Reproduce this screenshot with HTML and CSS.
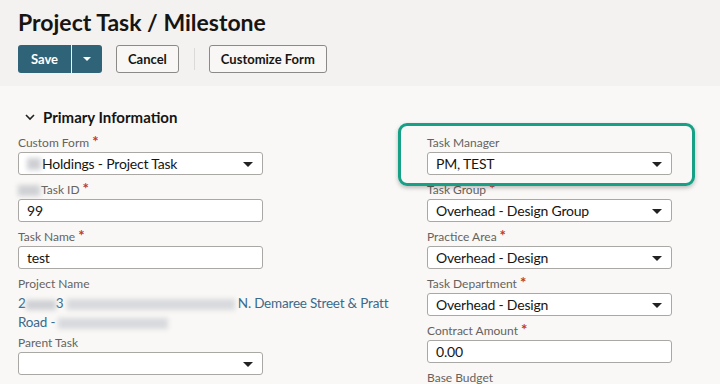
FILE: index.html
```html
<!DOCTYPE html>
<html lang="en">
<head>
    <meta charset="UTF-8">
    <meta name="viewport" content="width=device-width, initial-scale=1.0">
    <title>Project Task / Milestone</title>
    <link rel="stylesheet" href="styles.css">
</head>
<body>

    <!-- Page header with title and action buttons -->
    <header class="page-header">
        <h1>Project Task / Milestone</h1>
        <div class="actions">
            <div class="split-btn">
                <button class="btn-primary">Save</button>
                <button class="btn-primary caret-btn">
                    <svg width="10" height="6" viewBox="0 0 10 6"><path d="M1 1h8L5 5z" fill="#fff"/></svg>
                </button>
            </div>
            <button class="btn">Cancel</button>
            <span class="separator"></span>
            <button class="btn">Customize Form</button>
        </div>
    </header>

    <main class="content">
        <div class="section-title">
            <svg width="12" height="8" viewBox="0 0 12 8"><path d="M2 2l4 4 4-4" fill="none" stroke="#222" stroke-width="1.6"/></svg>
            <span>Primary Information</span>
        </div>

        <div class="form-grid">
            <!-- Left column -->
            <div class="column">
                <label class="field-label">Custom Form <span class="req">*</span></label>
                <div class="select"><span class="blur blur-sm"></span>Holdings - Project Task<span class="arrow"></span></div>

                <label class="field-label"><span class="blur blur-label"></span>Task ID <span class="req">*</span></label>
                <div class="input">99</div>

                <label class="field-label">Task Name <span class="req">*</span></label>
                <div class="input">test</div>

                <label class="field-label">Project Name</label>
                <div class="link-value">
                    2<span class="blur blur-num"></span>3 <span class="blur blur-long"></span> N. Demaree Street &amp; Pratt<br>
                    Road - <span class="blur blur-mid"></span>
                </div>

                <label class="field-label">Parent Task</label>
                <div class="select"><span class="arrow"></span></div>
            </div>

            <!-- Right column -->
            <div class="column">
                <div class="highlight"></div>
                <label class="field-label">Task Manager</label>
                <div class="select">PM, TEST<span class="arrow"></span></div>

                <label class="field-label">Task Group <span class="req">*</span></label>
                <div class="select">Overhead - Design Group<span class="arrow"></span></div>

                <label class="field-label">Practice Area <span class="req">*</span></label>
                <div class="select">Overhead - Design<span class="arrow"></span></div>

                <label class="field-label">Task Department <span class="req">*</span></label>
                <div class="select">Overhead - Design<span class="arrow"></span></div>

                <label class="field-label">Contract Amount <span class="req">*</span></label>
                <div class="input">0.00</div>

                <label class="field-label">Base Budget</label>
            </div>
        </div>
    </main>

</body>
</html>
```

FILE: styles.css
```css
/* Basic reset */
* {
    margin: 0;
    padding: 0;
    box-sizing: border-box;
}

body {
    font-family: 'Lato', 'Noto Sans', sans-serif;
    background: #f9f8f6;
    color: #161513;
    width: 720px;
    height: 384px;
    overflow: hidden;
}

/* Header */
.page-header {
    background: #f3f2f0;
    padding: 7px 18px 13px;
}

h1 {
    font-size: 23px;
    font-weight: 700;
    line-height: 30px;
}

.actions {
    display: flex;
    align-items: center;
    margin-top: 8px;
    height: 28px;
}

.split-btn {
    display: flex;
    border-radius: 3px;
    overflow: hidden;
}

button {
    font-family: inherit;
    font-size: 13px;
    font-weight: 700;
    height: 28px;
    cursor: pointer;
}

.btn-primary {
    background: #2f6478;
    color: #fff;
    border: none;
    width: 53px;
}

.caret-btn {
    width: 30px;
    margin-left: 1px;
    display: flex;
    align-items: center;
    justify-content: center;
}

.btn {
    background: #f8f7f5;
    color: #161513;
    border: 1px solid #8c8a87;
    border-radius: 3px;
    padding: 0 11px;
    margin-left: 14px;
}

.separator {
    width: 1px;
    height: 22px;
    background: #dcdad6;
    margin-left: 15px;
}

.separator + .btn {
    margin-left: 14px;
}

/* Content */
.content {
    padding: 21px 18px 0;
}

.section-title {
    display: flex;
    align-items: center;
    gap: 7px;
    padding-left: 6px;
    font-size: 15px;
    font-weight: 700;
    line-height: 20px;
}

.form-grid {
    display: grid;
    grid-template-columns: 245px 245px;
    column-gap: 164px;
    margin-top: 8px;
}

.column {
    position: relative;
    display: flex;
    flex-direction: column;
}

.field-label {
    font-size: 12px;
    color: #66635f;
    line-height: 16px;
    margin-bottom: 1px;
    display: flex;
    align-items: center;
}

.req {
    color: #c0392b;
    font-size: 15px;
    font-weight: 700;
    margin-left: 3px;
    line-height: 12px;
    position: relative;
    top: -2px;
}

.select,
.input {
    position: relative;
    height: 23px;
    background: #fff;
    border: 1px solid #aaa8a4;
    border-radius: 3px;
    font-size: 14px;
    letter-spacing: -0.2px;
    line-height: 21px;
    padding: 0 8px;
    margin-bottom: 7px;
    display: flex;
    align-items: center;
}

.arrow {
    position: absolute;
    right: 9px;
    top: 9px;
    border-left: 5px solid transparent;
    border-right: 5px solid transparent;
    border-top: 5px solid #222;
}

.link-value {
    color: #3a6a8c;
    font-size: 13.5px;
    letter-spacing: -0.2px;
    line-height: 19px;
    margin: 1px 0 3px;
    white-space: nowrap;
}

/* Redacted text */
.blur {
    display: inline-block;
    background: #cfd0d4;
    filter: blur(2.5px);
    vertical-align: middle;
}

.blur-sm { width: 14px; height: 12px; margin-right: 1px; }
.blur-label { width: 22px; height: 11px; margin-right: 1px; }
.blur-num { width: 30px; height: 10px; }
.blur-long { width: 168px; height: 11px; background: #d8d9dd; }
.blur-mid { width: 110px; height: 11px; background: #d8d9dd; }

/* Highlight box drawn over the Task Manager field */
.highlight {
    position: absolute;
    left: -29px;
    top: -12px;
    width: 297px;
    height: 63px;
    border: 3px solid #16a085;
    border-radius: 9px;
    box-shadow: 0 2px 4px rgba(0, 0, 0, 0.25);
    z-index: 2;
    pointer-events: none;
}
```
